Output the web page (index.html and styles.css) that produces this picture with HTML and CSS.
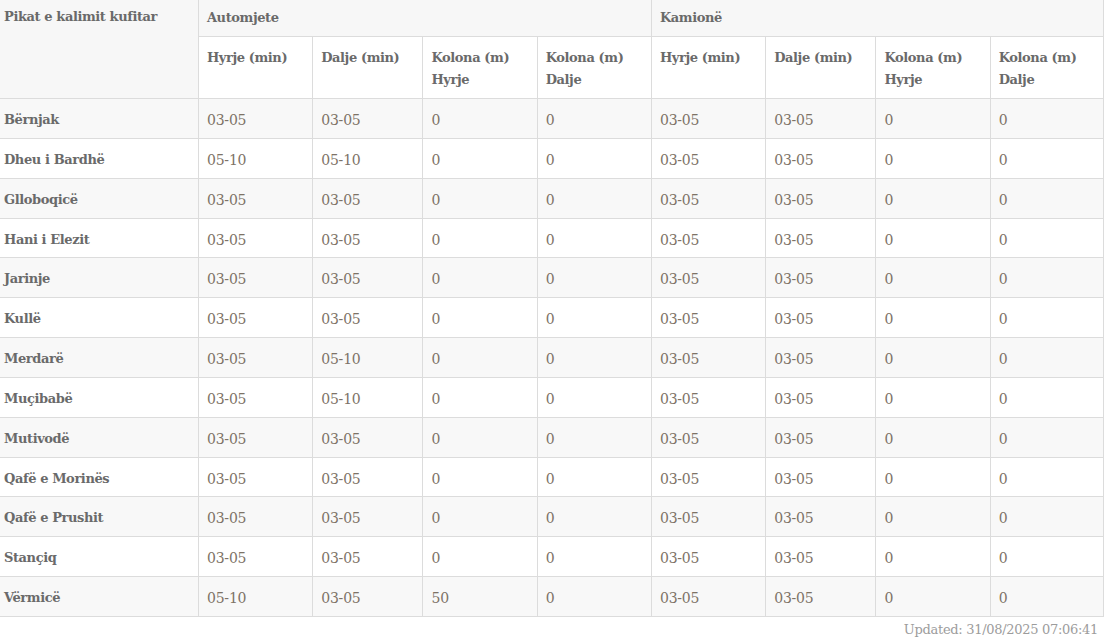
FILE: index.html
```html
<!DOCTYPE html>
<html lang="sq">
<head>
<meta charset="utf-8">
<title>Pikat e kalimit kufitar</title>
<link rel="stylesheet" href="styles.css">
</head>
<body>
<div class="wrap">
<table class="border-table">
  <colgroup>
    <col class="c-name">
    <col class="c-a"><col class="c-b"><col class="c-a"><col class="c-a">
    <col class="c-a"><col class="c-b"><col class="c-a"><col class="c-last">
  </colgroup>
  <thead>
    <tr class="h1">
      <th rowspan="2" class="name grey">Pikat e kalimit kufitar</th>
      <th colspan="4" class="grey">Automjete</th>
      <th colspan="4" class="grey">Kamionë</th>
    </tr>
    <tr class="h2">
      <th>Hyrje (min)</th><th>Dalje (min)</th><th>Kolona (m)<br>Hyrje</th><th>Kolona (m)<br>Dalje</th>
      <th>Hyrje (min)</th><th>Dalje (min)</th><th>Kolona (m)<br>Hyrje</th><th>Kolona (m)<br>Dalje</th>
    </tr>
  </thead>
  <tbody>
    <tr><th class="name">Bërnjak</th><td>03-05</td><td>03-05</td><td>0</td><td>0</td><td>03-05</td><td>03-05</td><td>0</td><td>0</td></tr>
    <tr><th class="name">Dheu i Bardhë</th><td>05-10</td><td>05-10</td><td>0</td><td>0</td><td>03-05</td><td>03-05</td><td>0</td><td>0</td></tr>
    <tr><th class="name">Glloboqicë</th><td>03-05</td><td>03-05</td><td>0</td><td>0</td><td>03-05</td><td>03-05</td><td>0</td><td>0</td></tr>
    <tr><th class="name">Hani i Elezit</th><td>03-05</td><td>03-05</td><td>0</td><td>0</td><td>03-05</td><td>03-05</td><td>0</td><td>0</td></tr>
    <tr><th class="name">Jarinje</th><td>03-05</td><td>03-05</td><td>0</td><td>0</td><td>03-05</td><td>03-05</td><td>0</td><td>0</td></tr>
    <tr><th class="name">Kullë</th><td>03-05</td><td>03-05</td><td>0</td><td>0</td><td>03-05</td><td>03-05</td><td>0</td><td>0</td></tr>
    <tr><th class="name">Merdarë</th><td>03-05</td><td>05-10</td><td>0</td><td>0</td><td>03-05</td><td>03-05</td><td>0</td><td>0</td></tr>
    <tr><th class="name">Muçibabë</th><td>03-05</td><td>05-10</td><td>0</td><td>0</td><td>03-05</td><td>03-05</td><td>0</td><td>0</td></tr>
    <tr><th class="name">Mutivodë</th><td>03-05</td><td>03-05</td><td>0</td><td>0</td><td>03-05</td><td>03-05</td><td>0</td><td>0</td></tr>
    <tr><th class="name">Qafë e Morinës</th><td>03-05</td><td>03-05</td><td>0</td><td>0</td><td>03-05</td><td>03-05</td><td>0</td><td>0</td></tr>
    <tr><th class="name">Qafë e Prushit</th><td>03-05</td><td>03-05</td><td>0</td><td>0</td><td>03-05</td><td>03-05</td><td>0</td><td>0</td></tr>
    <tr><th class="name">Stançiq</th><td>03-05</td><td>03-05</td><td>0</td><td>0</td><td>03-05</td><td>03-05</td><td>0</td><td>0</td></tr>
    <tr><th class="name">Vërmicë</th><td>05-10</td><td>03-05</td><td>50</td><td>0</td><td>03-05</td><td>03-05</td><td>0</td><td>0</td></tr>
  </tbody>
</table>
<p class="updated">Updated: 31/08/2025 07:06:41</p>
</div>
</body>
</html>
```
FILE: styles.css
```css
html, body {
  margin: 0;
  padding: 0;
  background: #fff;
}
.wrap {
  width: 1104px;
}
.border-table {
  width: 1104px;
  border-collapse: collapse;
  table-layout: fixed;
  font-family: "DejaVu Serif", "Liberation Serif", serif;
}
.c-name { width: 198px; }
.c-a { width: 114px; }
.c-b { width: 110px; }
.c-last { width: 113px; }

.border-table th,
.border-table td {
  border: 1px solid #dcdcdc;
  text-align: left;
  vertical-align: top;
  padding: 10px 8px 6px;
  line-height: 22.85px;
}
.border-table tr > :first-child {
  border-left: none;
}
.border-table thead tr.h1 th {
  border-top: none;
}
.border-table th {
  font-family: "DejaVu Serif", serif;
  font-weight: bold;
  font-size: 13px;
  color: #6a6a6a;
  letter-spacing: -0.4px;
}
.border-table th.name {
  padding-left: 4px;
}
.border-table thead tr.h1 th {
  padding-top: 7px;
  padding-bottom: 7px;
  line-height: 22px;
}
.border-table thead tr.h1 th.name {
  padding-top: 6px;
}
.border-table thead tr.h2 th {
  padding-top: 10px;
  padding-bottom: 7px;
  line-height: 22px;
}
.border-table td {
  font-size: 14px;
  color: #7d7266;
  letter-spacing: -0.2px;
}
.grey { background: #f7f7f7; }
.border-table tbody tr:nth-child(odd) { background: #f8f8f8; }

.updated {
  margin: 5px 6px 0 0;
  text-align: right;
  font-family: "DejaVu Serif", serif;
  font-size: 13px;
  color: #9c9c9c;
  letter-spacing: -0.3px;
}
```
